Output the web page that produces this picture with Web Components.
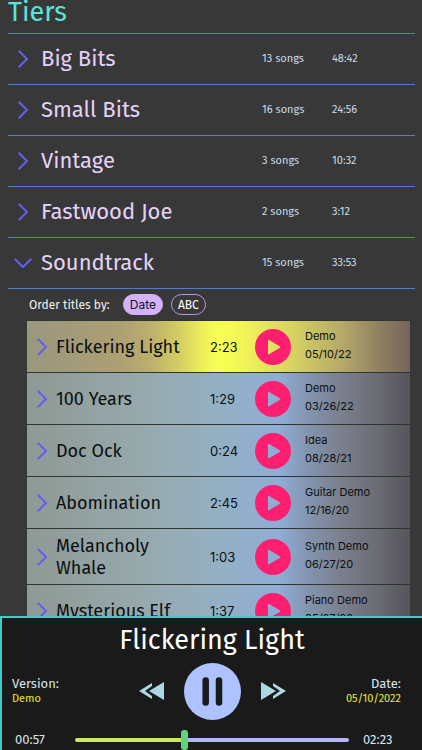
<!DOCTYPE html>
<html lang="en">
<head>
<meta charset="utf-8">
<meta name="viewport" content="width=device-width, initial-scale=1">
<title>Tiers</title>
<style>
  body { margin: 0; background: #383838; font-family: "Fira Sans", "Noto Sans", sans-serif; }
</style>
</head>
<body>
<music-app></music-app>
<script>
const define = (name, html, setup) => {
  const template = document.createElement('template');
  template.innerHTML = html;
  customElements.define(name, class extends HTMLElement {
    constructor() {
      super();
      this.attachShadow({ mode: 'open' }).append(template.content.cloneNode(true));
    }
    connectedCallback() { if (setup) setup(this, this.shadowRoot); }
  });
};

define('chevron-icon', `
<style>
  :host { display: flex; justify-content: center; align-items: center; width: 20px; height: 20px; color: #625ff0; }
  :host([open]) svg { transform: rotate(90deg); }
  svg { display: block; overflow: visible; }
</style>
<svg width="10" height="18" viewBox="0 0 10 18" fill="none" stroke="currentColor" stroke-width="2" aria-hidden="true"><path d="M.7 .7 9 9 .7 17.3"/></svg>`);

define('tier-row', `
<style>
  :host { display: block; border-bottom: 1px solid #4f7fc4; }
  button { display: grid; grid-template-columns: 20px minmax(0, 1fr) 70px 83px; align-items: center; width: 100%; height: 50px;
    padding: 0 0 0 5px; border: 0; background: none; color: #c9dcea; font: 11px/16px "Fira Sans", "Noto Sans", sans-serif; text-align: left; cursor: pointer; }
  .name { padding-left: 8px; font-size: 22px; line-height: 30px; color: #e4d2fa; white-space: nowrap; }
</style>
<button type="button"><chevron-icon></chevron-icon><span class="name"><slot></slot></span><span class="songs"></span><span class="time"></span></button>`,
(el, root) => {
  root.querySelector('.songs').textContent = el.getAttribute('songs') + ' songs';
  root.querySelector('.time').textContent = el.getAttribute('time');
  root.querySelector('chevron-icon').toggleAttribute('open', el.hasAttribute('open'));
  root.querySelector('button').setAttribute('aria-expanded', el.hasAttribute('open'));
});

define('order-by', `
<style>
  :host { display: flex; align-items: center; height: 31px; padding-left: 21px; font-size: 12px; color: #f2f2f2; }
  span { margin-right: 13px; }
  button { height: 21px; padding: 0 6px; margin-right: 8px; border: 1px solid #b99ae0; border-radius: 11px; background: none; color: #fff;
    font: 12px/18px "Fira Sans", "Noto Sans", sans-serif; }
  .on { background: #d4b2ff; border-color: #d4b2ff; color: #111; font-family: Inter, sans-serif; }
</style>
<span>Order titles by:</span><button class="on" type="button" aria-pressed="true">Date</button><button type="button" aria-pressed="false">ABC</button>`);

define('song-row', `
<style>
  :host { display: grid; grid-template-columns: 20px minmax(0, 1fr) 45px 50px 105px; align-items: center; min-height: 51px;
    padding-left: 5px; border-top: 1px solid #2c352f; color: #0b0f12; font-family: Inter, sans-serif;
    background: linear-gradient(90deg, #8f9994 0%, #97a9ad 30%, #94b0c4 50%, #8fadd6 66%, #8395b0 73%, #7b8291 81%, #6c6d75 91%, #55545a 100%); }
  :host([current]) { background: linear-gradient(90deg, #99977f 0%, #ad9f72 24%, #bcae6c 32%, #d6ce62 40%, #eef058 46%, #f8ff52 50%, #f2f656 56%, #dad662 68%, #b6aa68 82%, #8c7c60 93%, #75645a 100%); }
  .name { padding: 6px 12px 5px 4px; font: 18px/22px "Fira Sans", "Noto Sans", sans-serif; }
  .time { font-size: 13px; }
  button { width: 36px; height: 36px; padding: 0; border: 0; background: none; color: #ff1f70; }
  svg { display: block; }
  .meta { padding-bottom: 4px; font-size: 11px; line-height: 18px; white-space: nowrap; }
</style>
<chevron-icon></chevron-icon><span class="name"><slot></slot></span><span class="time"></span>
<button type="button" aria-label="Play"><svg width="36" height="36" viewBox="0 0 36 36" fill="currentColor"><path fill-rule="evenodd" d="M18 0a18 18 0 1 1 0 36a18 18 0 1 1 0-36ZM13 11.3v13.4q0 1 1 .5l11-6.5q.9-.6 0-1.2l-11-6.6q-1-.5-1 .4Z"/></svg></button>
<div class="meta"><div class="kind"></div><div class="date"></div></div>`,
(el, root) => {
  for (const key of ['time', 'kind', 'date']) root.querySelector('.' + key).textContent = el.getAttribute(key);
});

define('track-player', `
<style>
  :host { display: block; box-sizing: border-box; border-top: 2px solid #43c9c6; border-left: 2px solid #43c9c6; background: #1a1a1a; color: #d6e6f0; }
  h2 { margin: 0; padding-top: 5px; font-weight: 400; font-size: 27px; line-height: 34px; text-align: center; color: #fff; }
  .controls { display: grid; grid-template-columns: minmax(0, 1fr) auto minmax(0, 1fr); align-items: center; height: 68px; padding: 0 10px; margin-bottom: 5px; }
  .info { font-size: 13px; line-height: 16px; }
  .info b { display: block; font-weight: 400; font-size: 11px; line-height: 14px; color: #e9e92e; }
  .end { padding-right: 11px; text-align: right; }
  .buttons { display: flex; align-items: center; gap: 20px; }
  button { padding: 0; border: 0; background: none; color: #add8e6; }
  svg { display: block; }
  .seek { display: grid; grid-template-columns: 60px minmax(0, 1fr) 73px; align-items: center; height: 20px; padding-left: 13px; font-size: 13px; line-height: 20px; }
  .seek span:last-child { padding-left: 14px; }
  input { appearance: none; width: 100%; height: 20px; margin: 0; background: none; }
  input::-webkit-slider-runnable-track { height: 4px; border-radius: 2px; background: linear-gradient(90deg, #cbe860 40%, #b3b5f8 40%); }
  input::-webkit-slider-thumb { appearance: none; width: 7px; height: 20px; margin-top: -8px; border-radius: 3px; background: #62d27c; }
</style>
<h2>Flickering Light</h2>
<div class="controls">
  <div class="info">Version:<b>Demo</b></div>
  <div class="buttons">
    <button type="button" aria-label="Previous"><svg width="25" height="18" viewBox="0 0 25 18" fill="currentColor"><path d="M25 0v18L10 9ZM13 1v3L6 9l7 5v3L0 9Z"/></svg></button>
    <button type="button" aria-label="Pause"><svg width="57" height="57" viewBox="0 0 57 57"><circle cx="28.500" cy="28.500" r="28.500" fill="#adc2ff"/><path d="M21.700 17.500v22M35 17.500v22" stroke="#1a1a1a" stroke-width="6.500" stroke-linecap="round"/></svg></button>
    <button type="button" aria-label="Next"><svg width="25" height="18" viewBox="0 0 25 18" fill="currentColor"><path d="M0 0v18L15 9ZM12 1v3l7 5-7 5v3L25 9Z"/></svg></button>
  </div>
  <div class="info end">Date:<b>05/10/2022</b></div>
</div>
<div class="seek"><span>00:57</span><input type="range" aria-label="Position" min="0" max="143" value="57"><span>02:23</span></div>`);

define('music-app', `
<style>
  :host { display: flex; flex-direction: column; height: 100vh; }
  main { flex: 1; min-height: 0; overflow: hidden auto; scrollbar-width: none; padding: 0 7px 0 8px; }
  h1 { margin: 0; padding-bottom: 9px; font-weight: 400; font-size: 27px; line-height: 24px; color: #58e6dc; border-bottom: 1px solid #4f7fc4; }
  .songs { margin: 0 5px 0 19px; }
</style>
<main>
  <h1>Tiers</h1>
  <tier-row songs="13" time="48:42">Big Bits</tier-row>
  <tier-row songs="16" time="24:56">Small Bits</tier-row>
  <tier-row songs="3" time="10:32">Vintage</tier-row>
  <tier-row songs="2" time="3:12">Fastwood Joe</tier-row>
  <tier-row songs="15" time="33:53" open>Soundtrack</tier-row>
  <order-by></order-by>
  <div class="songs">
    <song-row current time="2:23" kind="Demo" date="05/10/22">Flickering Light</song-row>
    <song-row time="1:29" kind="Demo" date="03/26/22">100 Years</song-row>
    <song-row time="0:24" kind="Idea" date="08/28/21">Doc Ock</song-row>
    <song-row time="2:45" kind="Guitar Demo" date="12/16/20">Abomination</song-row>
    <song-row time="1:03" kind="Synth Demo" date="06/27/20">Melancholy Whale</song-row>
    <song-row time="1:37" kind="Piano Demo" date="05/27/20">Mysterious Elf</song-row>
  </div>
</main>
<track-player></track-player>`);
</script>
</body>
</html>
